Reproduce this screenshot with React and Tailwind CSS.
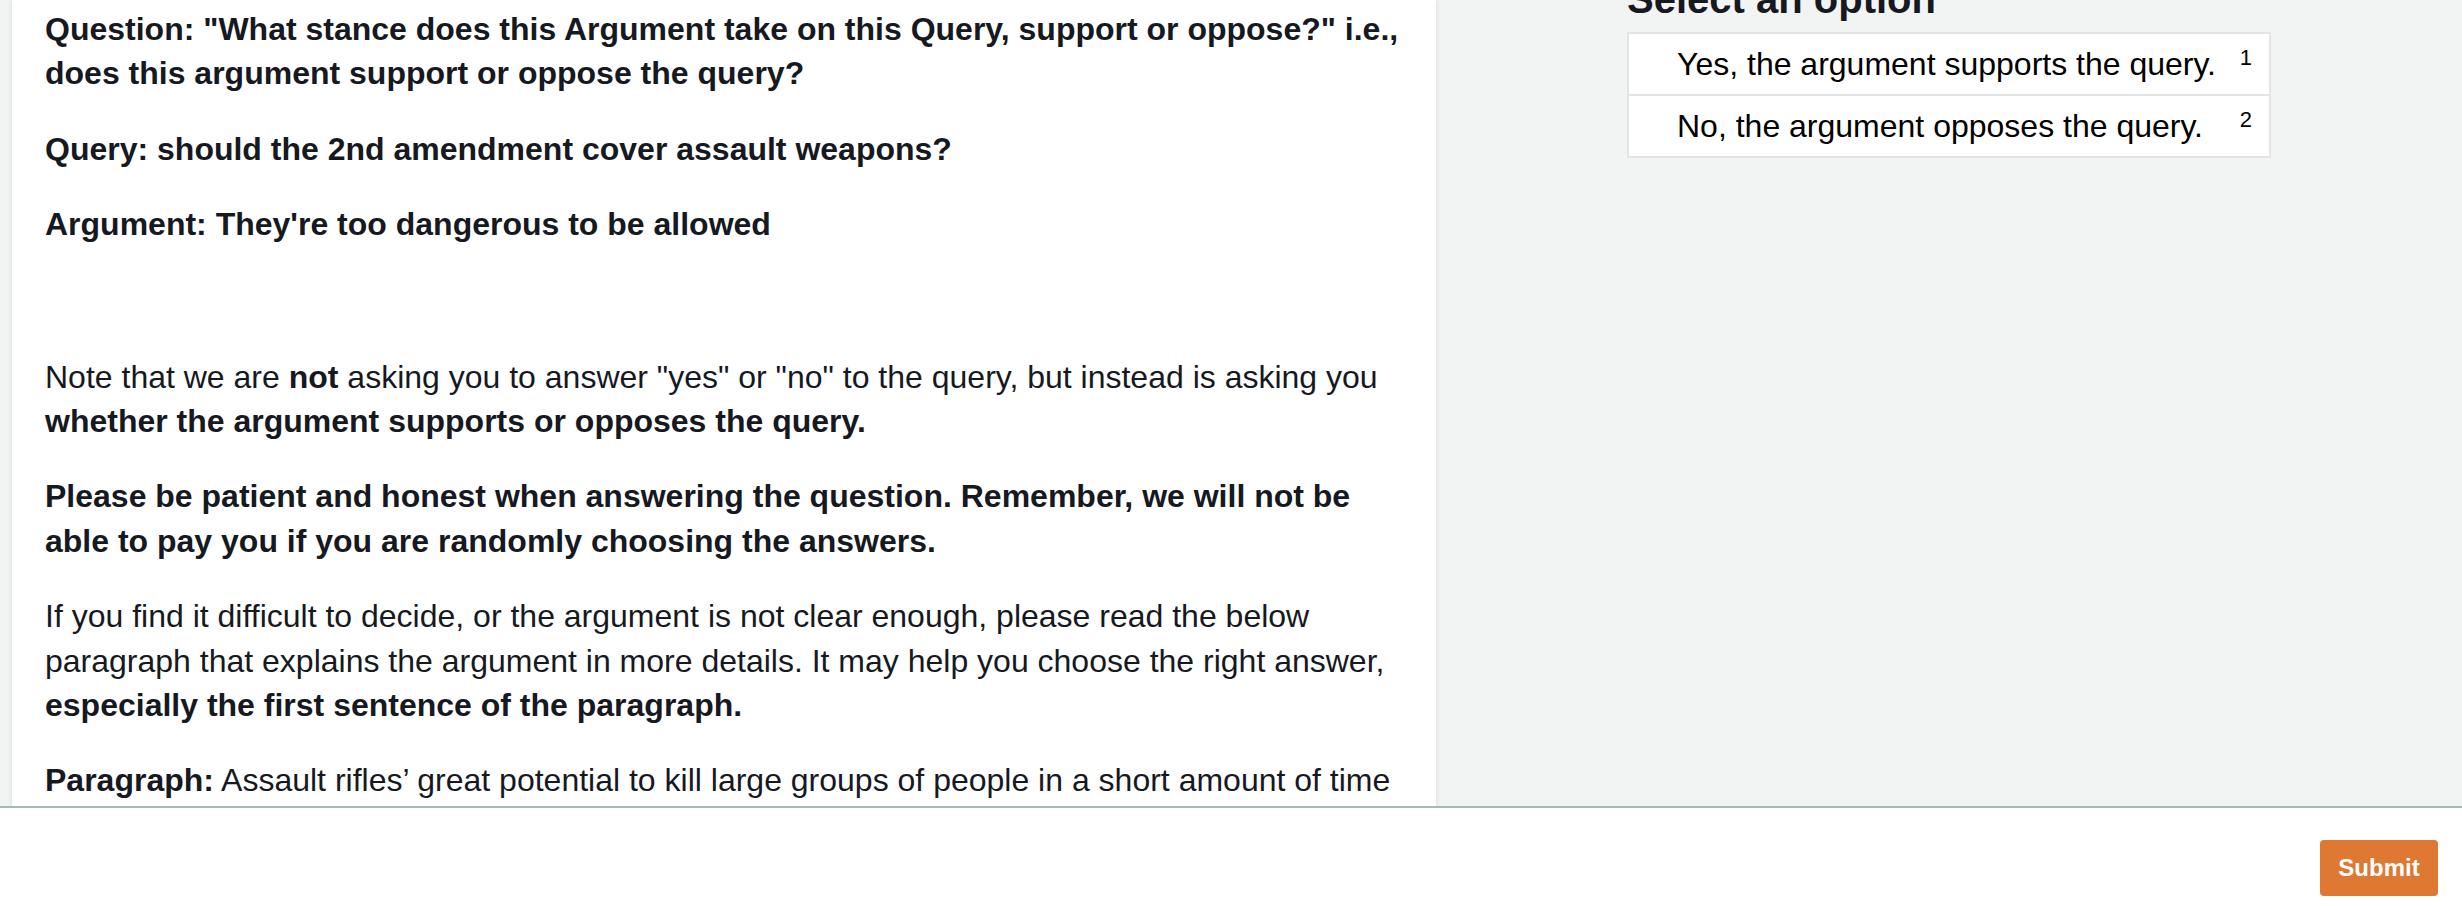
export default function App() {
  const options = [
    { label: 'Yes, the argument supports the query.', key: '1' },
    { label: 'No, the argument opposes the query.', key: '2' },
  ]

  return (
    <div
      className="w-[2462px] h-[906px] flex flex-col bg-white overflow-hidden"
      style={{ fontFamily: '"Liberation Sans", Arial, Helvetica, sans-serif' }}
    >
      {/* ── MAIN ── */}
      <div className="h-[806px] flex bg-[#f2f3f3] overflow-hidden">
        <div className="w-[1424px] ml-[12px] bg-white shadow-[0_0_5px_rgba(0,0,0,0.12)] px-[33px] pt-[7px] text-[32px] leading-[44.4px] text-[#16191f]">
          <p className="font-bold mb-[31px]">
            Question: "What stance does this Argument take on this Query, support or oppose?" i.e., does this argument support or oppose the query?
          </p>
          <p className="font-bold mb-[31px]">Query: should the 2nd amendment cover assault weapons?</p>
          <p className="font-bold mb-[108px]">Argument: They're too dangerous to be allowed</p>

          <p className="mb-[31px]">
            Note that we are <b>not</b> asking you to answer "yes" or "no" to the query, but instead is asking you{' '}
            <b>whether the argument supports or opposes the query.</b>
          </p>
          <p className="font-bold mb-[31px]">
            Please be patient and honest when answering the question. Remember, we will not be able to pay you if you are randomly choosing the answers.
          </p>
          <p className="mb-[31px]">
            If you find it difficult to decide, or the argument is not clear enough, please read the below paragraph that explains the argument in more details. It may help you choose the right answer,{' '}
            <b>especially the first sentence of the paragraph.</b>
          </p>
          <p>
            <b>Paragraph:</b> Assault rifles’ great potential to kill large groups of people in a short amount of time
          </p>
        </div>

        <div className="flex-1 flex justify-center">
          <div className="w-[644px]">
            <h2 className="mt-[-25px] mb-[9px] text-[40px] leading-[48px] font-bold text-[#16191f]">Select an option</h2>
            <div className="bg-white border-2 border-b-0 border-[#e3e5e5]">
              {options.map(opt => (
                <div key={opt.key} className="relative h-[62px] border-b-2 border-[#e3e5e5] flex items-center pl-[48px] text-[32px] text-black">
                  {opt.label}
                  <span className="absolute top-[13px] right-[17px] text-[22px] leading-[22px]">{opt.key}</span>
                </div>
              ))}
            </div>
          </div>
        </div>
      </div>

      {/* ── FOOTER ── */}
      <div className="flex-1 border-t-2 border-[#aab7b8] flex justify-end items-start pt-[32px] pr-[24px]">
        <button className="w-[118px] h-[56px] rounded-[4px] bg-[#de7833] text-white text-[24px] font-bold">
          Submit
        </button>
      </div>
    </div>
  )
}
